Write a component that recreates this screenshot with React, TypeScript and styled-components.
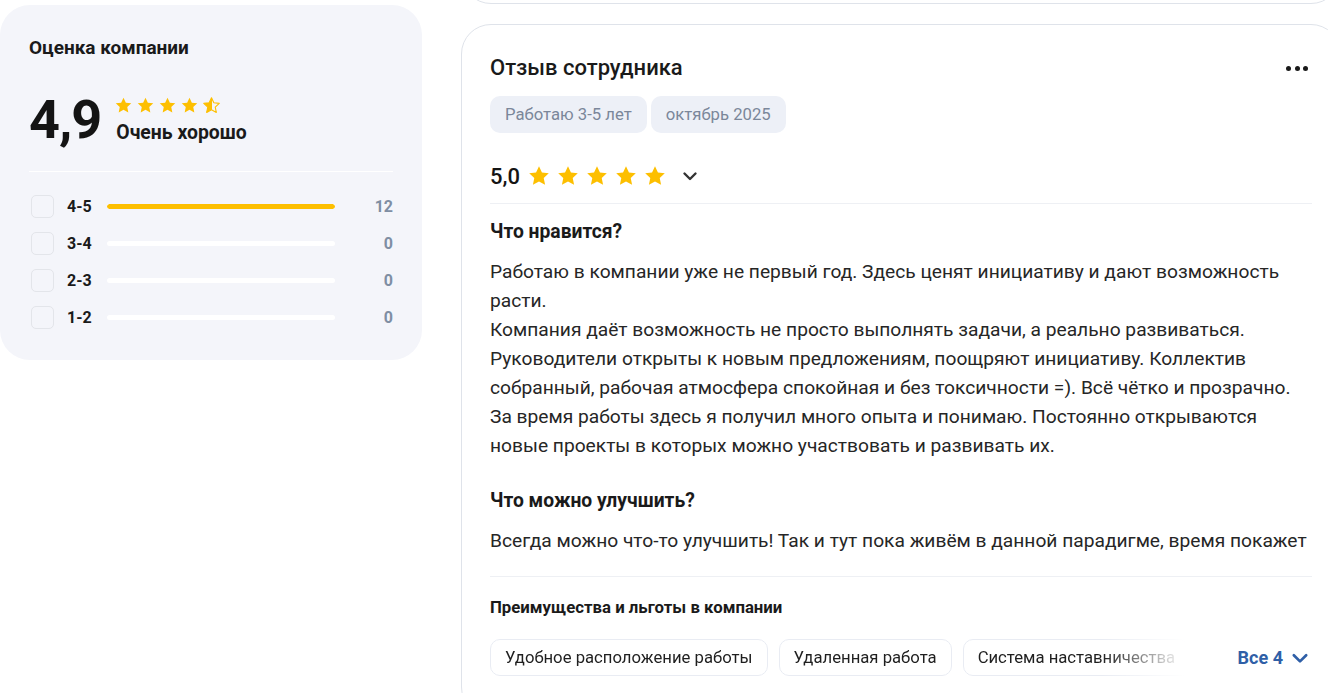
import { createGlobalStyle, styled } from 'styled-components'

const GlobalStyle = createGlobalStyle`
  html, body {
    margin: 0;
    padding: 0;
    background: #ffffff;
    overflow: hidden;
  }
  body {
    font-family: Roboto, "Liberation Sans", Arial, sans-serif;
    color: #1f1f1f;
  }
`

const STAR_PATH =
  'M12 2.2l2.95 6.3 6.85.8-5.08 4.7 1.36 6.8L12 17.4l-6.08 3.4 1.36-6.8L2.2 9.3l6.85-.8z'

type StarProps = { size: number; fill?: 'full' | 'half' }

function Star({ size, fill = 'full' }: StarProps): JSX.Element {
  const id = `half-${size}`
  return (
    <svg width={size} height={size} viewBox="0 0 24 24">
      {fill === 'half' && (
        <defs>
          <linearGradient id={id}>
            <stop offset="50%" stopColor="#fdbf00" />
            <stop offset="50%" stopColor="#ffffff" stopOpacity="0" />
          </linearGradient>
        </defs>
      )}
      <path
        d={STAR_PATH}
        fill={fill === 'half' ? `url(#${id})` : '#fdbf00'}
        stroke="#fdbf00"
        strokeWidth={fill === 'half' ? 1.4 : 0}
        strokeLinejoin="round"
      />
    </svg>
  )
}

function Chevron({ color, size = 16 }: { color: string; size?: number }): JSX.Element {
  return (
    <svg width={size} height={size} viewBox="0 0 16 16" fill="none">
      <path d="M2.5 5.5L8 11l5.5-5.5" stroke={color} strokeWidth="2.4" strokeLinecap="round" strokeLinejoin="round" />
    </svg>
  )
}

const distribution = [
  { label: '4-5', count: 12, part: 1 },
  { label: '3-4', count: 0, part: 0 },
  { label: '2-3', count: 0, part: 0 },
  { label: '1-2', count: 0, part: 0 },
]

const benefits = ['Удобное расположение работы', 'Удаленная работа', 'Система наставничества']

const likedText = `Работаю в компании уже не первый год. Здесь ценят инициативу и дают возможность расти.
Компания даёт возможность не просто выполнять задачи, а реально развиваться.
Руководители открыты к новым предложениям, поощряют инициативу. Коллектив собранный, рабочая атмосфера спокойная и без токсичности =). Всё чётко и прозрачно. За время работы здесь я получил много опыта и понимаю. Постоянно открываются новые проекты в которых можно участвовать и развивать их.`

export default function App(): JSX.Element {
  return (
    <>
      <GlobalStyle />
      <Page>
        <Sidebar>
          <SummaryCard>
            <SummaryTitle>Оценка компании</SummaryTitle>
            <ScoreRow>
              <BigScore>4,9</BigScore>
              <ScoreInfo>
                <Stars $gap={3}>
                  <Star size={19} />
                  <Star size={19} />
                  <Star size={19} />
                  <Star size={19} />
                  <Star size={19} fill="half" />
                </Stars>
                <ScoreWord>Очень хорошо</ScoreWord>
              </ScoreInfo>
            </ScoreRow>
            <Divider $color="#ffffff" />
            <Distribution>
              {distribution.map((row) => (
                <DistRow key={row.label}>
                  <Checkbox />
                  <DistLabel>{row.label}</DistLabel>
                  <Track>
                    <Fill style={{ width: `${row.part * 100}%` }} />
                  </Track>
                  <DistCount>{row.count}</DistCount>
                </DistRow>
              ))}
            </Distribution>
          </SummaryCard>
        </Sidebar>
        <Feed>
          <PrevCard />
          <ReviewCard>
            <ReviewHeader>
              <ReviewTitle>Отзыв сотрудника</ReviewTitle>
              <MoreButton aria-label="Ещё">
                <Dot />
                <Dot />
                <Dot />
              </MoreButton>
            </ReviewHeader>
            <Tags>
              <Tag>Работаю 3-5 лет</Tag>
              <Tag>октябрь 2025</Tag>
            </Tags>
            <RatingRow>
              <RatingValue>5,0</RatingValue>
              <Stars $gap={5}>
                <Star size={24} />
                <Star size={24} />
                <Star size={24} />
                <Star size={24} />
                <Star size={24} />
              </Stars>
              <ExpandIcon>
                <Chevron color="#333333" size={16} />
              </ExpandIcon>
            </RatingRow>
            <Divider $color="#eef0f4" />
            <Section>
              <SectionTitle>Что нравится?</SectionTitle>
              <Paragraph>{likedText}</Paragraph>
            </Section>
            <Section>
              <SectionTitle>Что можно улучшить?</SectionTitle>
              <Paragraph>Всегда можно что-то улучшить! Так и тут пока живём в данной парадигме, время покажет</Paragraph>
            </Section>
            <Divider $color="#eef0f4" />
            <BenefitsTitle>Преимущества и льготы в компании</BenefitsTitle>
            <BenefitsRow>
              <Chips>
                {benefits.map((b) => (
                  <Chip key={b}>{b}</Chip>
                ))}
              </Chips>
              <ShowAll>
                Все 4
                <Chevron color="#2f5fa7" size={18} />
              </ShowAll>
            </BenefitsRow>
          </ReviewCard>
        </Feed>
      </Page>
    </>
  )
}

const Page = styled.div`
  display: flex;
  align-items: flex-start;
  gap: 39px;
  width: 1400px;
`

const Sidebar = styled.aside`
  flex: none;
  width: 422px;
  padding-top: 5px;
`

const SummaryCard = styled.section`
  background: #f4f5fa;
  border-radius: 30px;
  padding: 31px 29px 0;
  box-sizing: border-box;
  height: 355px;
`

const SummaryTitle = styled.h3`
  margin: 0;
  font-size: 19px;
  font-weight: 700;
  line-height: 24px;
  color: #1a1a1a;
`

const ScoreRow = styled.div`
  display: flex;
  align-items: center;
  gap: 15px;
  margin: 27px 0 18px;
`

const BigScore = styled.div`
  font-size: 54px;
  font-weight: 700;
  line-height: 66px;
  letter-spacing: -1px;
  color: #141414;
`

const ScoreInfo = styled.div`
  display: flex;
  flex-direction: column;
  gap: 7px;
`

const Stars = styled.div<{ $gap: number }>`
  display: flex;
  gap: ${(p) => p.$gap}px;
  margin-left: -2px;
`

const ScoreWord = styled.div`
  font-size: 19.4px;
  font-weight: 700;
  line-height: 22px;
  color: #1a1a1a;
`

const Divider = styled.hr<{ $color: string }>`
  border: none;
  height: 1px;
  background: ${(p) => p.$color};
  margin: 0;
`

const Distribution = styled.div`
  display: flex;
  flex-direction: column;
  gap: 13px;
  margin-top: 22px;
`

const DistRow = styled.div`
  display: flex;
  align-items: center;
  height: 24px;
`

const Checkbox = styled.span`
  flex: none;
  width: 23px;
  height: 23px;
  margin-left: 2px;
  box-sizing: border-box;
  border: 1px solid #e3e5ea;
  border-radius: 5px;
  background: #f4f5fa;
`

const DistLabel = styled.span`
  width: 40px;
  margin-left: 13px;
  font-size: 16px;
  font-weight: 700;
  color: #1a1a1a;
`

const Track = styled.div`
  width: 228px;
  height: 5px;
  border-radius: 3px;
  background: #ffffff;
  overflow: hidden;
`

const Fill = styled.div`
  height: 100%;
  background: #fdbf00;
  border-radius: 3px;
`

const DistCount = styled.span`
  flex: 1;
  text-align: right;
  font-size: 16px;
  font-weight: 700;
  color: #7f8ea3;
`

const Feed = styled.main`
  flex: none;
  width: 880px;
  display: flex;
  flex-direction: column;
  gap: 20px;
`

const PrevCard = styled.div`
  height: 100px;
  margin-top: -98px;
  border: 1px solid #dfe3ea;
  border-radius: 30px;
`

const ReviewCard = styled.article`
  border: 1px solid #dfe3ea;
  border-radius: 30px;
  padding: 29px 28px 40px;
  display: flex;
  flex-direction: column;
`

const ReviewHeader = styled.header`
  display: flex;
  align-items: center;
  justify-content: space-between;
`

const ReviewTitle = styled.h2`
  margin: 0;
  font-size: 22px;
  font-weight: 500;
  line-height: 28px;
  color: #1a1a1a;
`

const MoreButton = styled.button`
  display: flex;
  gap: 3.5px;
  padding: 0;
  margin-right: 4px;
  border: none;
  background: none;
`

const Dot = styled.span`
  width: 5px;
  height: 5px;
  border-radius: 50%;
  background: #1a1a1a;
`

const Tags = styled.div`
  display: flex;
  gap: 4px;
  margin-top: 14px;
`

const Tag = styled.span`
  height: 37px;
  padding: 0 15px;
  display: flex;
  align-items: center;
  border-radius: 10px;
  background: #edf0f7;
  font-size: 16.7px;
  color: #7b879a;
`

const RatingRow = styled.div`
  display: flex;
  align-items: center;
  gap: 9px;
  height: 26px;
  margin: 30px 0 14px;
`

const RatingValue = styled.span`
  font-size: 22px;
  font-weight: 500;
  color: #141414;
`

const ExpandIcon = styled.span`
  display: flex;
  margin-left: 6px;
`

const Section = styled.section`
  margin-top: 16px;
  & + & {
    margin-top: 29px;
  }
  & + ${Divider} {
    margin-top: 21px;
  }
`

const SectionTitle = styled.h4`
  margin: 0;
  font-size: 19.3px;
  font-weight: 700;
  line-height: 24px;
  color: #1a1a1a;
`

const Paragraph = styled.p`
  margin: 13px 0 0;
  font-size: 19.2px;
  line-height: 29px;
  color: #262626;
  white-space: pre-line;
`

const BenefitsTitle = styled.h5`
  margin: 19px 0 0;
  font-size: 16.8px;
  font-weight: 700;
  line-height: 22px;
  color: #1a1a1a;
`

const BenefitsRow = styled.div`
  display: flex;
  align-items: center;
  margin-top: 21px;
`

const Chips = styled.div`
  display: flex;
  gap: 11px;
  width: 695px;
  overflow: hidden;
  mask-image: linear-gradient(to right, #000 88%, transparent 100%);
`

const Chip = styled.span`
  flex: none;
  height: 37px;
  padding: 0 14px;
  display: flex;
  align-items: center;
  border: 1px solid #e9ecf3;
  border-radius: 10px;
  box-sizing: border-box;
  font-size: 16.7px;
  color: #1f1f1f;
`

const ShowAll = styled.button`
  margin-left: auto;
  margin-right: 3px;
  display: flex;
  align-items: center;
  gap: 8px;
  padding: 0;
  border: none;
  background: none;
  font-family: inherit;
  font-size: 18px;
  font-weight: 700;
  color: #2f5fa7;
`
